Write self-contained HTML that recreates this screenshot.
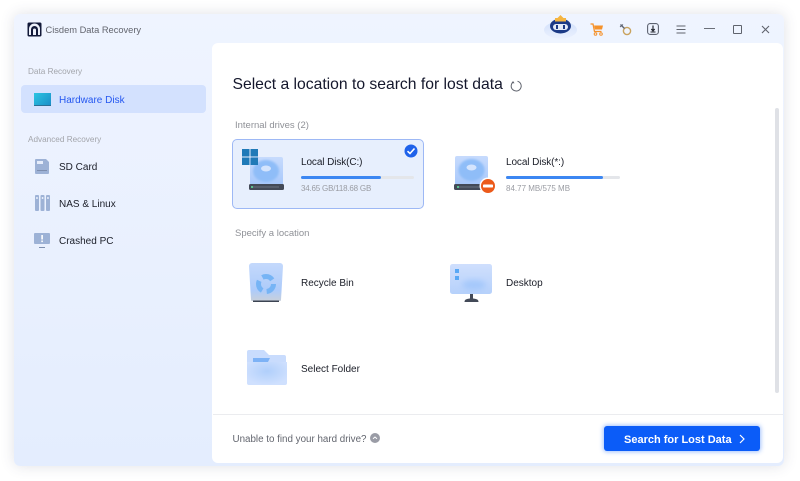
<!DOCTYPE html>
<html><head><meta charset="utf-8"><style>
html,body{margin:0;padding:0;width:800px;height:481px;overflow:hidden;background:#fff}
body{font-family:"Liberation Sans",sans-serif;position:relative}
.a{position:absolute;white-space:nowrap}
#win{position:absolute;left:14px;top:14px;width:770px;height:452px;border-radius:6px;background:linear-gradient(180deg,#eff4ff 0%,#e4edfe 100%);box-shadow:0 0 14px rgba(60,70,100,.16)}
#main{position:absolute;left:212px;top:43px;width:571px;height:420px;background:#fff;border-radius:6px}
.t{font-size:10px;line-height:14px;color:#1b1e28}
.g{font-size:8px;line-height:12px;color:#9a9ca3}
svg{position:absolute;overflow:visible}
</style></head><body>
<div id="win"></div>
<div id="main"></div>

<svg style="left:27px;top:22px" width="15" height="15" viewBox="0 0 15 15"><rect x=".5" y=".5" width="14" height="14" rx="1.5" fill="#131a3a"/><path d="M2 13V7a5.5 5.5 0 0 1 11 0v6h-2V7.5a3.500 3.500 0 0 0-7 0V13z" fill="#eef2fb"/><path d="M6 13V8a1.500 1.500 0 0 1 3 0v5z" fill="#eef2fb"/></svg>
<div class="a" style="left:45.5px;top:23px;font-size:9.3px;line-height:14px;color:#62656e">Cisdem Data Recovery</div>

<div class="a g" style="left:28px;top:66px;font-size:8.2px;color:#a3a5ab">Data Recovery</div>
<div class="a" style="left:21px;top:85px;width:185px;height:28px;background:#d3e1fe;border-radius:4px"></div>
<div class="a" style="left:34px;top:93px;width:17px;height:12px;background:linear-gradient(135deg,#2cc5e2,#1b8fc8);box-shadow:0 1px 0 #2b6f95"></div>
<div class="a t" style="left:59px;top:94px;color:#2457f0">Hardware Disk</div>

<div class="a g" style="left:28px;top:134px;font-size:8.2px;color:#a3a5ab">Advanced Recovery</div>

<svg style="left:35px;top:159px" width="15" height="16" viewBox="0 0 15 16"><path d="M1 0h10l3 3v11a1 1 0 0 1-1 1H1a1 1 0 0 1-1-1V1a1 1 0 0 1 1-1z" fill="#9db2d6"/><rect x="2" y="2" width="6" height="3" fill="#e6edfb"/><rect x="2" y="11" width="10" height="1" fill="#7d8eae"/></svg>
<div class="a t" style="left:59px;top:161px">SD Card</div>

<svg style="left:35px;top:195px" width="15" height="17" viewBox="0 0 15 17"><rect y="0" width="4" height="16" rx="1" fill="#9db2d6"/><rect x="5.5" y="0" width="4" height="16" rx="1" fill="#9db2d6"/><rect x="11" y="0" width="4" height="16" rx="1" fill="#9db2d6"/><rect x="1.2" y="2" width="1.5" height="2" fill="#e6edfb"/><rect x="6.8" y="2" width="1.5" height="2" fill="#e6edfb"/><rect x="12.2" y="2" width="1.5" height="2" fill="#e6edfb"/></svg>
<div class="a t" style="left:59px;top:198px">NAS &amp; Linux</div>

<svg style="left:34px;top:233px" width="17" height="15" viewBox="0 0 17 15"><rect width="16" height="11" rx="1" fill="#9db2d6"/><rect x="7.3" y="2" width="1.6" height="4.5" fill="#fff"/><rect x="7.3" y="7.5" width="1.6" height="1.6" fill="#fff"/><rect x="5" y="14" width="6" height="1" fill="#7d8eae"/></svg>
<div class="a t" style="left:59px;top:235px">Crashed PC</div>

<!-- top bar -->
<svg style="left:544px;top:15px" width="34" height="24" viewBox="0 0 34 24"><defs><linearGradient id="c" x1="0" y1="0" x2="0" y2="1"><stop offset="0" stop-color="#d3e1fb"/><stop offset="1" stop-color="#eaf0fe"/></linearGradient></defs><ellipse cx="16.500" cy="15" rx="16.500" ry="8.500" fill="url(#c)"/><ellipse cx="16.500" cy="11" rx="10.500" ry="7.500" fill="#1c3a86"/><rect x="9" y="9" width="15" height="6" rx="3" fill="#e4ebf8"/><rect x="12" y="10" width="2" height="4" fill="#1c3a86"/><rect x="19" y="10" width="2" height="4" fill="#1c3a86"/><path d="M16.500 0l3 3H22v3.500H11V3h2.500z" fill="#f5b541"/></svg>
<svg style="left:590px;top:23px" width="14" height="13" viewBox="0 0 14 13"><path d="M.5 1H3l1.500 7.500h7" fill="none" stroke="#f5922b" stroke-width="1.300"/><path d="M4 2.500h9l-1 4H5z" fill="#f5922b"/><circle cx="5.500" cy="11" r="1.300" fill="none" stroke="#f5922b"/><circle cx="11" cy="11" r="1.300" fill="none" stroke="#f5922b"/></svg>
<svg style="left:619px;top:23px" width="13" height="13" viewBox="0 0 13 13"><circle cx="8" cy="8" r="3.600" fill="none" stroke="#c9a35e" stroke-width="1.400"/><path d="M1.500 1.500l4 4" stroke="#5c6270" stroke-width="1.300"/><path d="M1 4l3-2.500" stroke="#5c6270" stroke-width="1"/></svg>
<svg style="left:647px;top:23px" width="12" height="12" viewBox="0 0 12 12"><rect x=".6" y=".6" width="10.800" height="10.800" rx="2.500" fill="none" stroke="#5c6270" stroke-width="1.100"/><path d="M6 2.500v5M4.300 6L6 8l1.700-2" fill="none" stroke="#23262f" stroke-width="1.200"/><path d="M3.500 9h5" stroke="#23262f"/></svg>
<svg style="left:676px;top:25px" width="10" height="9" viewBox="0 0 10 9"><path d="M.5 1h9M.5 4.500h9M.5 8h9" stroke="#5f636d" stroke-width="1.100"/></svg>
<div class="a" style="left:704px;top:28px;width:11px;height:1.200px;background:#6b6f79"></div>
<div class="a" style="left:733px;top:25px;width:7px;height:7px;border:1.200px solid #5f636d;border-radius:1px"></div>
<svg style="left:761px;top:24.500px" width="9" height="9" viewBox="0 0 9 9"><path d="M1 1l7 7M8 1L1 8" stroke="#5f636d" stroke-width="1.100"/></svg>

<!-- heading -->
<div class="a" style="left:232.500px;top:75px;font-size:15.700px;line-height:20px;color:#14172c">Select a location to search for lost data</div>
<svg style="left:510px;top:80px" width="12" height="12" viewBox="0 0 12 12"><path d="M3.500 1.800A5 5 0 1 0 7.500 1.200" fill="none" stroke="#5f636d" stroke-width="1"/><path d="M3 1l1.500 2.200L1.500 3.200" fill="#5f636d"/></svg>

<div class="a g" style="left:235px;top:120px;font-size:9.500px;color:#8f9197">Internal drives (2)</div>

<!-- selected card -->
<div class="a" style="left:232px;top:139px;width:190px;height:68px;background:#e7effd;border:1px solid #9db8f5;border-radius:5px"></div>

<svg style="left:242px;top:149px" width="45" height="46" viewBox="0 0 45 46"><defs><linearGradient id="d" x1="0" y1="0" x2="0" y2="1"><stop offset="0" stop-color="#c7dbfd"/><stop offset="1" stop-color="#a9c9fb"/></linearGradient><clipPath id="cp"><rect x="7" y="8" width="34" height="27"/></clipPath><clipPath id="cq"><rect x="1" y="1" width="33" height="28"/></clipPath><filter id="b1" x="-20%" y="-20%" width="140%" height="140%"><feGaussianBlur stdDeviation="1"/></filter><filter id="b3" x="-40%" y="-40%" width="180%" height="180%"><feGaussianBlur stdDeviation="3"/></filter></defs><path d="M8 10a2 2 0 0 1 2-2h29a2 2 0 0 1 2 2v25H8z" fill="url(#d)"/><g clip-path="url(#cp)"><ellipse cx="24" cy="22" rx="13" ry="11" fill="#8fbdf8" filter="url(#b1)"/></g><ellipse cx="24" cy="19.500" rx="5" ry="3" fill="#d4e4fd"/><rect x="7" y="35" width="35" height="6" rx="1.500" fill="#434a58"/><rect x="11" y="37.500" width="26" height="1" fill="#6a7280"/><rect x="9" y="37" width="2" height="2" fill="#58c08e"/><rect x="0" y="0" width="7.500" height="7.500" fill="#1f7ab8"/><rect x="8.500" y="0" width="7.500" height="7.500" fill="#1f7ab8"/><rect x="0" y="8.500" width="7.500" height="7.500" fill="#1f7ab8"/><rect x="8.500" y="8.500" width="7.500" height="7.500" fill="#1f7ab8"/></svg>
<div class="a t" style="left:301px;top:155.500px;letter-spacing:-.1px">Local Disk(C:)</div>
<div class="a" style="left:301px;top:176px;width:113px;height:3px;background:#e4e6ea;border-radius:2px"></div>
<div class="a" style="left:301px;top:176px;width:80px;height:3px;background:#3c87f2;border-radius:2px"></div>
<div class="a g" style="left:301px;top:181.500px;line-height:13px;letter-spacing:-.2px">34.65 GB/118.68 GB</div>
<svg style="left:404px;top:144px" width="14" height="14" viewBox="0 0 14 14"><circle cx="7" cy="7" r="6.500" fill="#1f62ea"/><path d="M3.500 7.200L6 9.500l4.500-5" fill="none" stroke="#fff" stroke-width="1.600"/></svg>

<!-- second -->
<svg style="left:454px;top:155px" width="44" height="40" viewBox="0 0 44 40"><path d="M1 3a2 2 0 0 1 2-2h29a2 2 0 0 1 2 2v26H1z" fill="url(#d)"/><g clip-path="url(#cq)"><ellipse cx="17.500" cy="15" rx="13" ry="11" fill="#8fbdf8" filter="url(#b1)"/></g><ellipse cx="17.500" cy="12.500" rx="5" ry="3" fill="#d4e4fd"/><rect x="0" y="29" width="34" height="6" rx="1.500" fill="#434a58"/><rect x="5" y="31.500" width="24" height="1" fill="#6a7280"/><rect x="3" y="31" width="2" height="2" fill="#58c08e"/><circle cx="34" cy="31" r="8.500" fill="#fff"/><circle cx="34" cy="31" r="7" fill="#ec5a1a"/><rect x="29" y="29.500" width="10" height="3" rx=".8" fill="#fff"/></svg>
<div class="a t" style="left:506px;top:155.500px;letter-spacing:-.1px">Local Disk(*:)</div>
<div class="a" style="left:506px;top:176px;width:114px;height:3px;background:#e4e6ea;border-radius:2px"></div>
<div class="a" style="left:506px;top:176px;width:97px;height:3px;background:#3c87f2;border-radius:2px"></div>
<div class="a g" style="left:506px;top:181.500px;line-height:13px">84.77 MB/575 MB</div>

<div class="a g" style="left:235px;top:228px;font-size:9.500px;color:#8f9197">Specify a location</div>

<!-- recycle -->
<svg style="left:249px;top:262px" width="34" height="41" viewBox="0 0 34 41"><defs><linearGradient id="r" x1="0" y1="0" x2="0" y2="1"><stop offset="0" stop-color="#c4d9fc"/><stop offset=".72" stop-color="#adcbfa"/><stop offset="1" stop-color="#c9d0db"/></linearGradient></defs><path d="M0 4a3 3 0 0 1 3-3h28a3 3 0 0 1 3 3l-2 34a1 1 0 0 1-1 1H3a1 1 0 0 1-1-1z" fill="url(#r)"/><circle cx="17" cy="22" r="7.500" fill="none" stroke="#76b4f5" stroke-width="5" stroke-dasharray="11 4.700"/><rect x="4" y="38.500" width="26" height="1.500" fill="#3c4452"/></svg>
<div class="a t" style="left:301px;top:277px">Recycle Bin</div>

<!-- desktop -->
<svg style="left:450px;top:264px" width="44" height="38" viewBox="0 0 44 38"><defs><linearGradient id="m" x1="0" y1="0" x2="0" y2="1"><stop offset="0" stop-color="#cfdffd"/><stop offset="1" stop-color="#b6d1fb"/></linearGradient></defs><rect x="0" y="0" width="42" height="30" rx="2.500" fill="url(#m)"/><ellipse cx="24" cy="21" rx="12" ry="5" fill="#a4c8fb" filter="url(#b3)"/><rect x="5" y="5" width="4" height="4" fill="#58a8f5"/><rect x="5" y="12" width="4" height="4" fill="#58a8f5"/><rect x="20" y="30" width="3" height="5" fill="#434a58"/><path d="M14.500 38c0-2.500 2-3.500 7-3.500s7 1 7 3.500z" fill="#434a58"/></svg>
<div class="a t" style="left:506px;top:277px">Desktop</div>

<!-- folder -->
<svg style="left:246px;top:349px" width="41" height="37" viewBox="0 0 41 37"><defs><radialGradient id="f" cx=".5" cy=".4" r=".6"><stop offset="0" stop-color="#b0cffb"/><stop offset="1" stop-color="#cfe0fe"/></radialGradient></defs><path d="M1 3a2 2 0 0 1 2-2h15l5 5h15a2 2 0 0 1 2 2v7H1z" fill="#c9dcfd"/><path d="M7 9h17l-2 4H7z" fill="#7db2f6"/><path d="M1 13h40v21a2 2 0 0 1-2 2H3a2 2 0 0 1-2-2z" fill="url(#f)"/></svg>
<div class="a t" style="left:301px;top:363px">Select Folder</div>

<!-- scrollbar -->
<div class="a" style="left:775px;top:108px;width:4px;height:285px;background:#dfe1e6;border-radius:2px"></div>

<!-- footer -->
<div class="a" style="left:213px;top:414px;width:570px;height:1px;background:#ebecef"></div>
<div class="a" style="left:232.500px;top:433px;font-size:9.800px;line-height:14px;color:#62656e">Unable to find your hard drive?</div>
<svg style="left:370px;top:433px" width="10" height="10" viewBox="0 0 10 10"><circle cx="5" cy="5" r="5" fill="#9a9ca6"/><path d="M3 5.800l2-1.800 2 1.800" fill="none" stroke="#fff" stroke-width="1"/></svg>

<div class="a" style="left:604px;top:426px;width:156px;height:25px;background:#0b5cf8;border-radius:3px;box-shadow:0 0 4px 1px rgba(50,120,250,.45)"></div>
<div class="a" style="left:624px;top:433px;font-size:11px;line-height:14px;font-weight:bold;color:#fff">Search for Lost Data</div>
<svg style="left:739px;top:434px" width="6" height="10" viewBox="0 0 6 10"><path d="M1 1l4 4-4 4" fill="none" stroke="#fff" stroke-width="1.200"/></svg>
</body></html>
